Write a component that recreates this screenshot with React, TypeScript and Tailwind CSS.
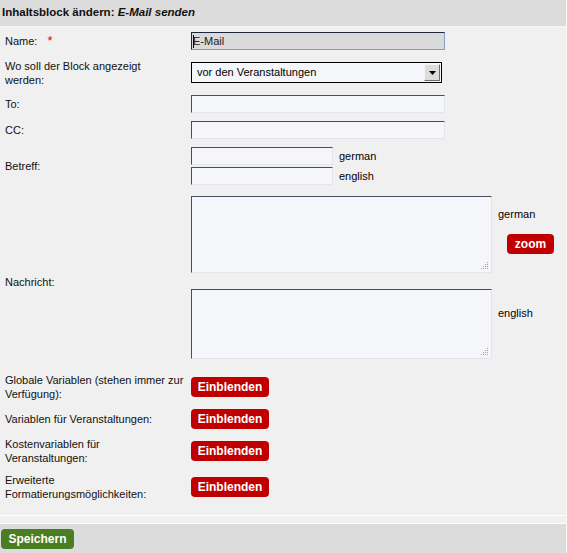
const font = "font-['Liberation_Sans',Arial,sans-serif]";

function TextInput({ w, value }: { w: string; value?: string }) {
  return (
    <div
      className={`${w} h-[18px] bg-[#f5f6fa] border border-t-[#4a4a62] border-l-[#4a4a62] border-r-[#e4e5ea] border-b-[#e4e5ea] text-[11px] leading-[16px] pl-[1px]`}
    >
      {value}
    </div>
  );
}

function Grip() {
  return (
    <svg className="absolute right-[2px] bottom-[2px]" width="8" height="8" viewBox="0 0 8 8">
      <g fill="#a0a0a8">
        <rect x="6" y="0" width="1" height="1" />
        <rect x="4" y="2" width="1" height="1" />
        <rect x="6" y="2" width="1" height="1" />
        <rect x="2" y="4" width="1" height="1" />
        <rect x="4" y="4" width="1" height="1" />
        <rect x="6" y="4" width="1" height="1" />
        <rect x="0" y="6" width="1" height="1" />
        <rect x="2" y="6" width="1" height="1" />
        <rect x="4" y="6" width="1" height="1" />
        <rect x="6" y="6" width="1" height="1" />
      </g>
    </svg>
  );
}

function TextArea({ h }: { h: string }) {
  return (
    <div
      className={`relative w-[301px] ${h} bg-[#f5f6fa] border border-t-[#4a4a62] border-l-[#4a4a62] border-r-[#e4e5ea] border-b-[#e4e5ea]`}
    >
      <Grip />
    </div>
  );
}

function RedButton({ label, w }: { label: string; w: string }) {
  return (
    <button
      className={`${w} h-[20px] rounded-[4px] bg-[#c00000] text-white text-[12px] font-bold leading-[20px] text-center block`}
    >
      {label}
    </button>
  );
}

function Row({ label, children, h, mt }: { label: React.ReactNode; children: React.ReactNode; h: string; mt: string }) {
  return (
    <div className={`flex items-center ${h} ${mt}`}>
      <div className="w-[191px] pl-[5px] pr-[4px] text-[11px] leading-[14px] text-[#111]">{label}</div>
      <div className="flex-1">{children}</div>
    </div>
  );
}

export default function App() {
  return (
    <div className={`${font} w-[567px] h-[553px] bg-[#f0f0f0] flex flex-col border-r border-r-[#f8f8f8]`}>
      <div className="h-[27px] bg-[#dcdcdc] border-b border-b-[#f4f4f4] flex items-center pl-[2px] pb-[1px] text-[11.5px] font-bold text-[#111]">
        Inhaltsblock ändern:&nbsp;<i>E-Mail senden</i>
      </div>

      <div className="flex-1 flex flex-col">
        <Row h="h-[18px]" mt="mt-[5px]" label={<span>Name: <span className="text-[#e00000] ml-[7px] text-[13px]">*</span></span>}>
          <div className="w-[254px] h-[18px] bg-[#dadada] border border-t-[#1c2440] border-l-[#1c2440] border-r-[#7f9dc8] border-b-[#7f9dc8] text-[11px] leading-[16px] pl-[1px] text-[#222] flex items-center">
            <span className="w-px h-[13px] bg-black mr-[1px]" />
            <span className="-ml-[2px]">E-Mail</span>
          </div>
        </Row>

        <Row h="h-[21px]" mt="mt-[12px]" label={<>Wo soll der Block angezeigt<br />werden:</>}>
          <div className="w-[251px] h-[21px] bg-[#f5f6fa] border border-black flex items-center justify-between text-[11px]">
            <span className="pl-[5px]">vor den Veranstaltungen</span>
            <span className="w-[16px] h-[17px] mr-[1px] bg-[#dcdcdc] border border-t-[#f4f4f4] border-l-[#f4f4f4] border-r-[#707070] border-b-[#707070] flex items-center justify-center">
              <svg width="7" height="4" viewBox="0 0 7 4">
                <path d="M0 0h7L3.5 4z" fill="#000" />
              </svg>
            </span>
          </div>
        </Row>

        <Row h="h-[18px]" mt="mt-[12px]" label="To:">
          <TextInput w="w-[254px]" />
        </Row>

        <Row h="h-[18px]" mt="mt-[8px]" label="CC:">
          <TextInput w="w-[254px]" />
        </Row>

        <Row h="h-[38px]" mt="mt-[8px]" label="Betreff:">
          <div className="flex flex-col gap-[2px]">
            <div className="flex items-center">
              <TextInput w="w-[142px]" />
              <span className="ml-[6px] text-[11px]">german</span>
            </div>
            <div className="flex items-center">
              <TextInput w="w-[142px]" />
              <span className="ml-[6px] text-[11px]">english</span>
            </div>
          </div>
        </Row>

        <Row h="h-[163px]" mt="mt-[11px]" label={<span className="relative top-[4px]">Nachricht:</span>}>
          <div className="flex flex-col gap-[16px]">
            <div className="flex">
              <TextArea h="h-[77px]" />
              <div className="flex flex-col pl-[6px] pt-[10px] text-[11px]">
                <span>german</span>
                <span className="mt-[11px] ml-[9px]">
                  <RedButton label="zoom" w="w-[47px]" />
                </span>
              </div>
            </div>
            <div className="flex">
              <TextArea h="h-[70px]" />
              <span className="pl-[6px] pt-[16px] text-[11px]">english</span>
            </div>
          </div>
        </Row>

        <Row h="h-[28px]" mt="mt-[14px]" label={<>Globale Variablen (stehen immer zur<br />Verfügung):</>}>
          <RedButton label="Einblenden" w="w-[78px]" />
        </Row>
        <Row h="h-[28px]" mt="mt-[4px]" label="Variablen für Veranstaltungen:">
          <RedButton label="Einblenden" w="w-[78px]" />
        </Row>
        <Row h="h-[28px]" mt="mt-[4px]" label={<>Kostenvariablen für<br />Veranstaltungen:</>}>
          <RedButton label="Einblenden" w="w-[78px]" />
        </Row>
        <Row h="h-[28px]" mt="mt-[8px]" label={<>Erweiterte<br />Formatierungsmöglichkeiten:</>}>
          <RedButton label="Einblenden" w="w-[78px]" />
        </Row>
      </div>

      <div className="h-[9px] border-t border-t-white border-b border-b-white" />
      <div className="h-[29px] bg-[#dcdcdc] pl-[1px] pt-[5px]">
        <button className="block w-[73px] h-[20px] rounded-[4px] bg-[#4b7d23] text-white text-[12px] font-bold leading-[20px]">
          Speichern
        </button>
      </div>
    </div>
  );
}
